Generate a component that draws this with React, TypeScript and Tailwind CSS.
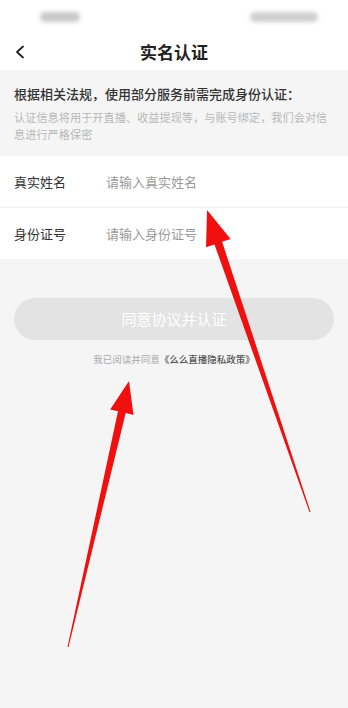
import React from 'react';

const cjk = { fontFamily: '"Noto Sans CJK SC", "Noto Sans", sans-serif' };

const Arrows = () => (
  <svg className="absolute inset-0 pointer-events-none" width="348" height="708" viewBox="0 0 348 708">
    <polygon
      fill="#f01010"
      points="207,210 230.6,238.9 222.1,241.8 310.5,511.8 309.5,512.2 214.5,244.4 206,247.3"
    />
    <polygon
      fill="#f01010"
      points="129,381 133.5,414.9 125.7,413.1 68.5,647.1 67.5,646.9 118,411.3 110.2,409.5"
    />
  </svg>
);

export default function App() {
  return (
    <div className="relative w-[348px] h-[708px] bg-[#f5f5f5] overflow-hidden" style={cjk}>
      {/* status bar (blurred in source) */}
      <div className="h-[34px] bg-white flex items-center justify-between pl-[40px] pr-[30px]">
        <div className="w-[40px] h-[10px] rounded-full bg-[#c8c8c8] blur-[2px]" />
        <div className="w-[68px] h-[10px] rounded-full bg-[#cfcfcf] blur-[2px]" />
      </div>

      {/* header */}
      <div className="h-[36px] bg-white flex items-center relative">
        <svg className="absolute left-[14px]" width="12" height="14" viewBox="0 0 12 14">
          <path d="M9 1.5 L3 7 L9 12.5" fill="none" stroke="#222" strokeWidth="1.8" strokeLinecap="round" strokeLinejoin="round" />
        </svg>
        <div className="w-full text-center text-[17px] font-bold text-[#222]">实名认证</div>
      </div>

      {/* notice */}
      <div className="px-[14px] pt-[15px] pb-[13px]">
        <p className="text-[13px] leading-[18px] font-medium text-[#333]">根据相关法规，使用部分服务前需完成身份认证：</p>
        <p className="mt-[6px] text-[11.2px] leading-[17px] text-[#b8b8b8]">
          认证信息将用于开直播、收益提现等，与账号绑定，我们会对信息进行严格保密
        </p>
      </div>

      {/* form */}
      <div className="bg-white">
        <div className="h-[52px] flex items-center px-[14px] border-b border-[#f2f2f2]">
          <span className="w-[92px] text-[13px] text-[#333]">真实姓名</span>
          <span className="text-[13px] text-[#9a9a9a]">请输入真实姓名</span>
        </div>
        <div className="h-[51px] flex items-center px-[14px]">
          <span className="w-[92px] text-[13px] text-[#333]">身份证号</span>
          <span className="text-[13px] text-[#9a9a9a]">请输入身份证号</span>
        </div>
      </div>

      {/* submit */}
      <div className="px-[14px] mt-[39px]">
        <button className="w-full h-[42px] rounded-full bg-[#e3e3e3] text-white text-[15px]">同意协议并认证</button>
      </div>
      <p className="mt-[12px] text-center text-[9.5px] leading-[14px] text-[#aaa]">
        我已阅读并同意<span className="text-[#555] font-medium">《么么直播隐私政策》</span>
      </p>

      <Arrows />
    </div>
  );
}
